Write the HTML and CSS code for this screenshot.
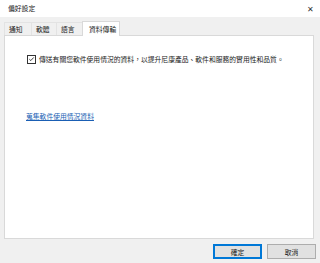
FILE: index.html
```html
<!DOCTYPE html>
<html lang="zh-Hant">
<head>
  <meta charset="UTF-8">
  <title>偏好設定</title>
  <link rel="stylesheet" href="styles.css">
</head>
<body>
  <div class="titlebar">
    <span class="title">偏好設定</span>
    <span class="close">✕</span>
  </div>
  <div class="tabs">
    <div class="tab">通知</div>
    <div class="tab">軟體</div>
    <div class="tab">語言</div>
    <div class="tab active">資料傳輸</div>
  </div>
  <div class="panel">
    <label class="check-row">
      <span class="checkbox">
        <svg width="8" height="8" viewBox="0 0 8 8"><path d="M1.5 4.2 L3.2 5.8 L6.6 2.2" fill="none" stroke="#222" stroke-width="1"/></svg>
      </span>
      <span>傳送有關您軟件使用情況的資料，以提升尼康產品、軟件和服務的實用性和品質。</span>
    </label>
    <a href="#" class="link">蒐集軟件使用情況資料</a>
  </div>
  <div class="footer">
    <button class="btn default">確定</button>
    <button class="btn">取消</button>
  </div>
</body>
</html>
```

FILE: styles.css
```css
* {
  box-sizing: border-box;
  margin: 0;
  padding: 0;
}
body {
  width: 320px;
  height: 263px;
  background: #f0f0f0;
  font-family: "Noto Sans CJK TC", "Noto Sans", sans-serif;
  font-size: 6.8px;
  color: #1a1a1a;
  overflow: hidden;
}
.titlebar {
  height: 17px;
  background: #ffffff;
  display: flex;
  align-items: center;
  justify-content: space-between;
  padding: 0 6px 1px 8px;
}
.close {
  font-size: 8px;
  color: #333;
}
.tabs {
  display: flex;
  align-items: flex-end;
  height: 18px;
  padding: 0 4px;
}
.tab {
  height: 13px;
  padding: 0 0 0 4px;
  display: flex;
  align-items: center;
  white-space: nowrap;
  border: 1px solid #e3e3e3;
  border-bottom: none;
  border-left: none;
  background: #f0f0f0;
}
.tab:first-child {
  border-left: 1px solid #e3e3e3;
  width: 28px;
}
.tab:nth-child(2) { width: 25px; }
.tab:nth-child(3) { width: 26px; }
.tab.active {
  height: 15px;
  background: #ffffff;
  border: 1px solid #d9d9d9;
  border-bottom: none;
  margin-left: -1px;
  margin-bottom: -1px;
  padding: 0 0 0 6px;
  width: 38px;
}
.panel {
  margin: 0 6px 0 4px;
  height: 204px;
  background: #ffffff;
  border: 1px solid #d9d9d9;
  padding: 18px 0 0 22px;
}
.check-row {
  display: flex;
  align-items: center;
  gap: 3px;
  height: 10px;
}
.checkbox {
  width: 9px;
  height: 9px;
  border: 1px solid #333;
  display: flex;
  align-items: center;
  justify-content: center;
}
.checkbox svg {
  display: block;
}
.link {
  display: inline-block;
  margin-top: 47px;
  margin-left: -1px;
  color: #1a5fb4;
  text-decoration: underline;
}
.footer {
  display: flex;
  justify-content: flex-end;
  gap: 5px;
  padding: 5px 4px 0 0;
}
.btn {
  width: 49px;
  height: 15px;
  font-family: inherit;
  font-size: 6.8px;
  color: #1a1a1a;
  background: #e1e1e1;
  border: 1px solid #adadad;
}
.btn.default {
  border: 1px solid #0078d7;
  box-shadow: inset 0 0 0 1px #0078d7;
}
```
